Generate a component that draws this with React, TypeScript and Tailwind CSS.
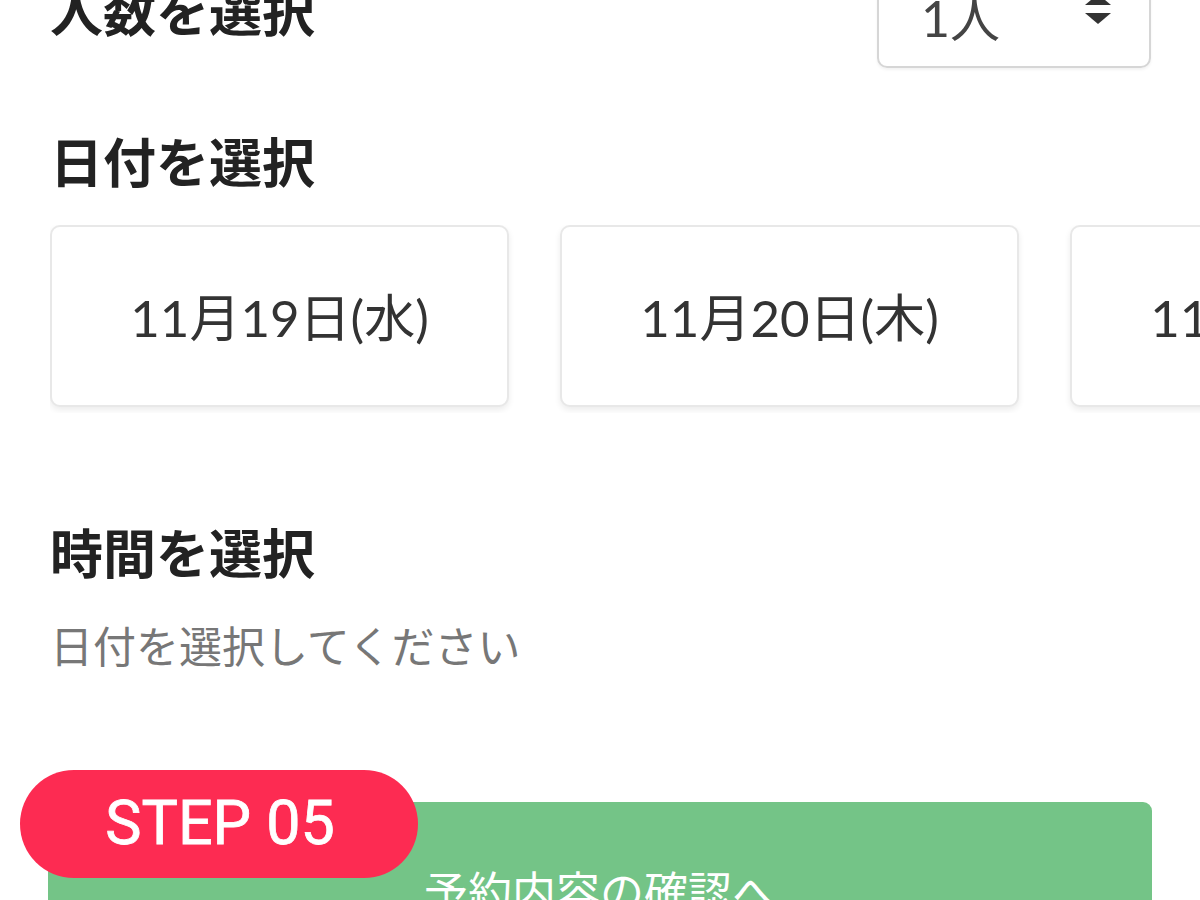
import React, { useState } from 'react';

const dates = ['11月19日(水)', '11月20日(木)', '11月21日(金)'];

const App: React.FC = () => {
  const [people] = useState('1人');

  return (
    <div className="w-[1200px] h-[900px] overflow-hidden bg-white font-['Lato','Noto_Sans_CJK_JP',sans-serif] text-[#222]">
      <div className="relative flow-root pl-[50px] pr-[49px]">
        {/* PEOPLE */}
        <div className="-mt-[44px] flex h-[112px] items-center justify-between">
          <h2 className="text-[53px] font-bold leading-[60px]">人数を選択</h2>
          <div className="flex h-[112px] w-[274px] items-center justify-between rounded-[10px] border-2 border-[#d6d6d6] pl-[42px] pr-[38px] shadow-[0_2px_3px_rgba(0,0,0,0.05)]">
            <span className="pt-[12px] text-[50px] leading-[60px] text-[#444]">{people}</span>
            <svg width="26" height="30" viewBox="0 0 26 30" className="-translate-y-[3px] text-[#333]">
              <path d="M13 0 L26 11 H0 Z" fill="currentColor" />
              <path d="M0 19 H26 L13 30 Z" fill="currentColor" />
            </svg>
          </div>
        </div>

        {/* DATE */}
        <h2 className="mt-[65px] text-[53px] font-bold leading-[60px]">日付を選択</h2>
        <div className="-mr-[49px] mt-[32px] flex gap-[51px] overflow-hidden pb-[6px]">
          {dates.map((d) => (
            <button
              key={d}
              className="flex h-[182px] w-[459px] shrink-0 items-center justify-center rounded-[10px] border-2 border-[#e8e8e8] bg-white pt-[4px] text-[51px] text-[#333] shadow-[0_3px_6px_rgba(0,0,0,0.08)]"
            >
              {d}
            </button>
          ))}
        </div>

        {/* TIME */}
        <h2 className="mt-[111px] text-[53px] font-bold leading-[60px]">時間を選択</h2>
        <p className="mt-[38px] text-[43px] leading-[50px] text-[#777]">日付を選択してください</p>

        {/* SUBMIT */}
        <button className="mt-[130px] -ml-[2px] flex h-[180px] w-[1104px] items-center justify-center rounded-[9px] bg-[#74c487] text-[44px] text-white">
          予約内容の確認へ
        </button>

        <div className="absolute left-[20px] top-[770px] flex h-[108px] w-[398px] items-center justify-center rounded-full bg-[#fd2b52] pl-[2px] font-['Roboto',sans-serif] text-[61px] font-normal text-white [-webkit-text-stroke:0.8px_white]">
          STEP 05
        </div>
      </div>
    </div>
  );
};

export default App;
